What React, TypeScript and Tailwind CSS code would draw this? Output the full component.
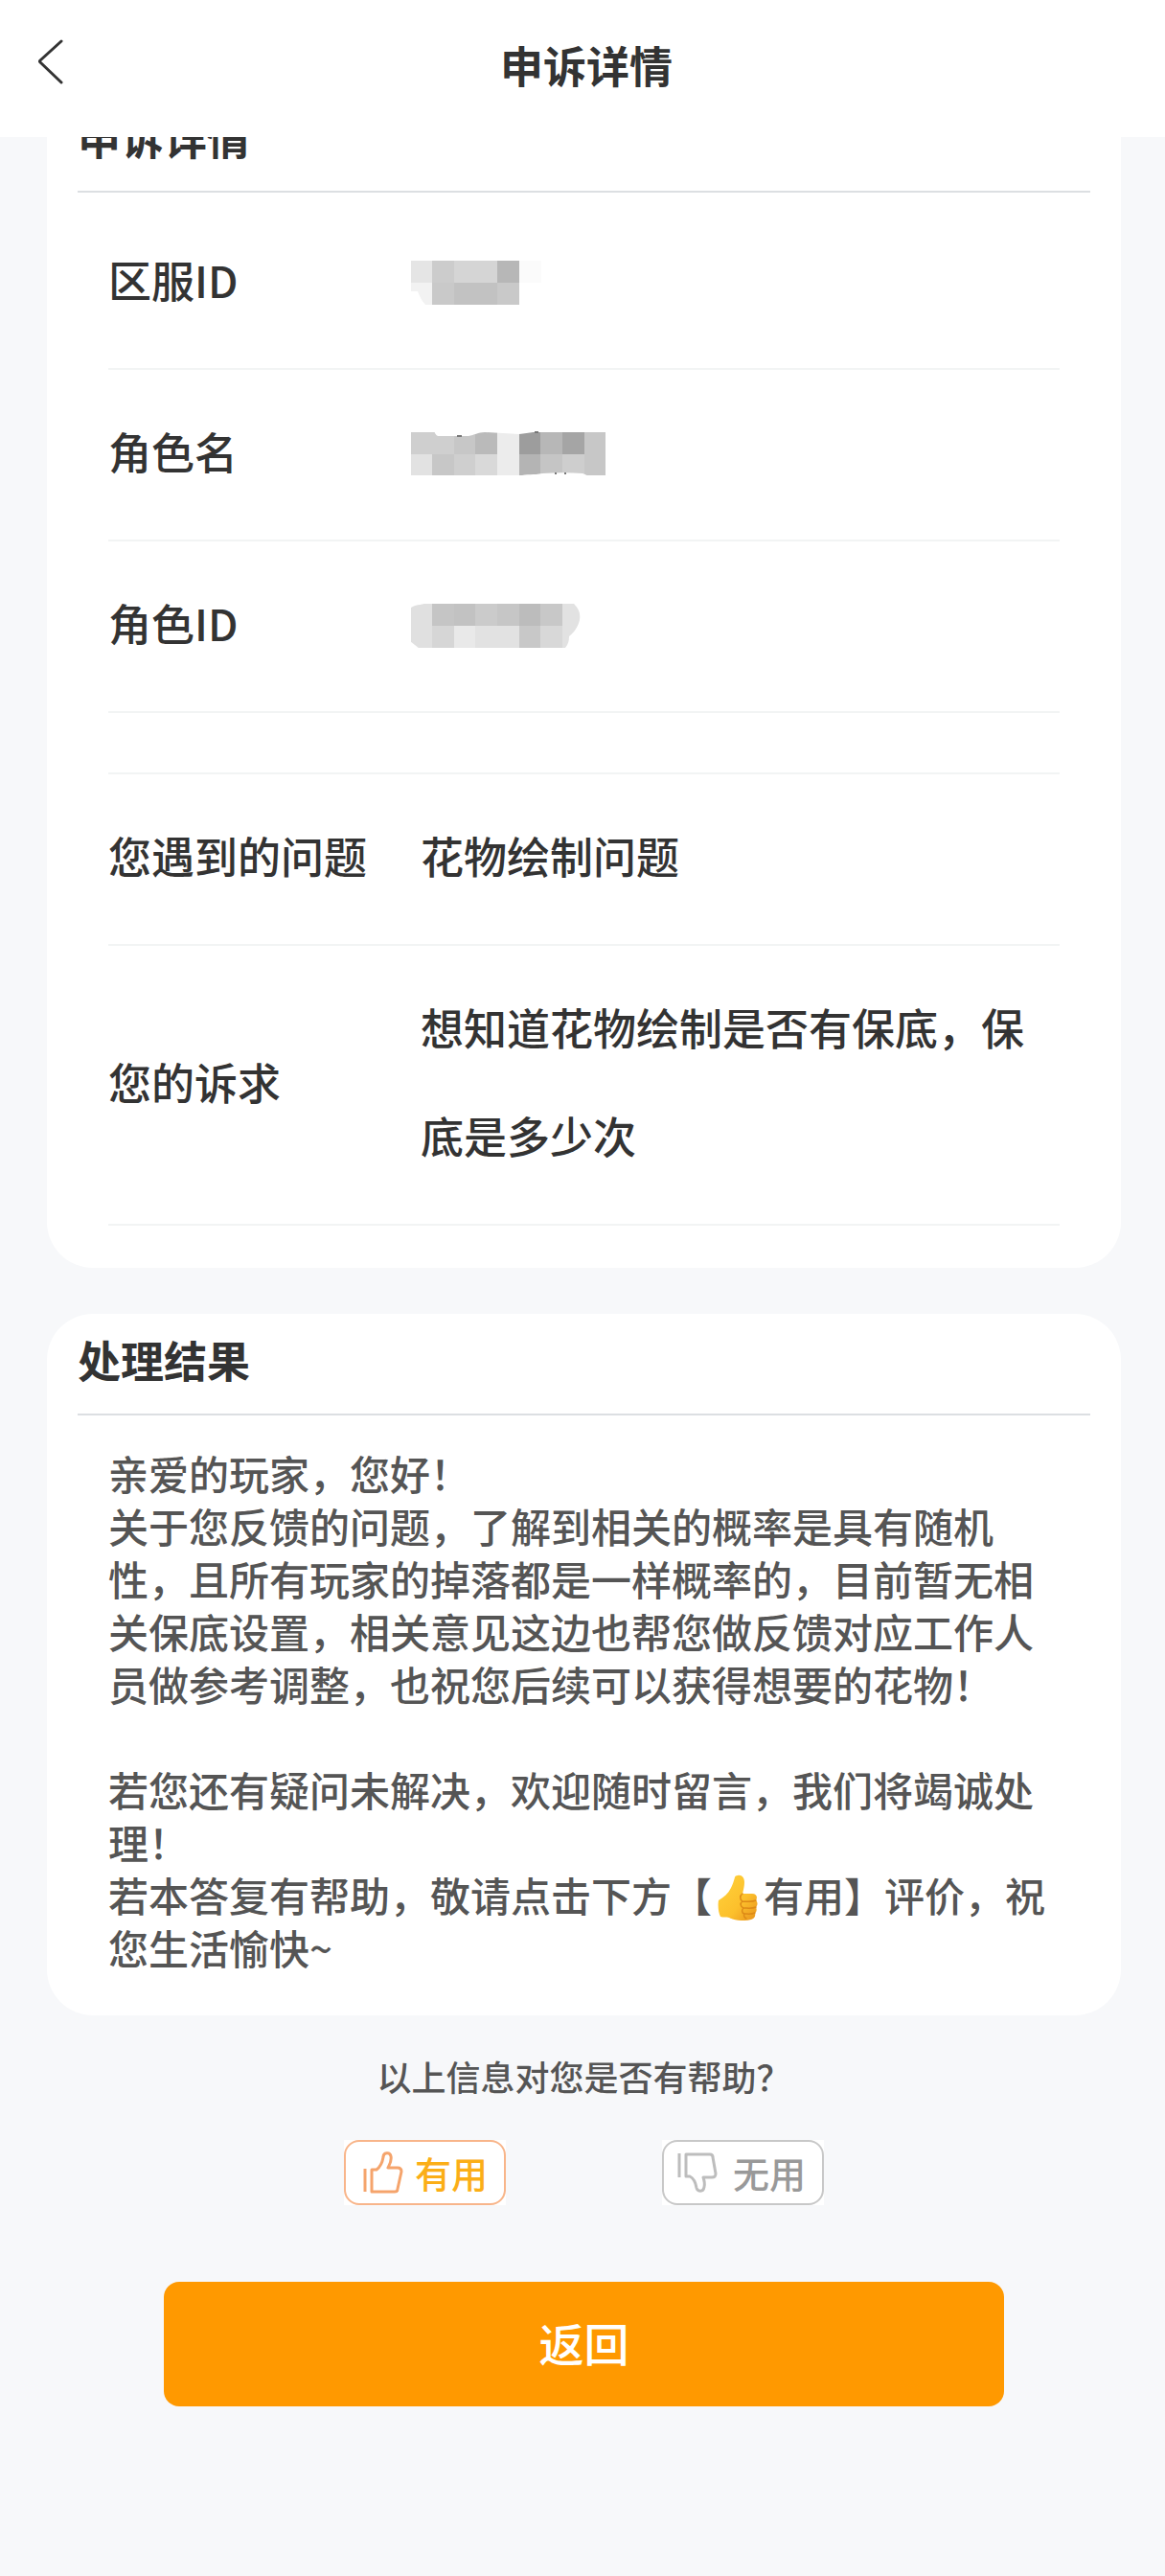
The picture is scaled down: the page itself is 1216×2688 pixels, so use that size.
import type { ReactNode } from "react";

type Tile = [x: number, y: number, w: number, h: number, fill: string];

// One redaction tile is 23px wide, two rows of them cover a value
const serverTiles: Tile[] = [
  [50, 17, 22, 23, "#e5e5e5"],
  [72, 17, 23, 23, "#cccccc"],
  [95, 17, 45, 23, "#d5d5d5"],
  [140, 17, 23, 23, "#b7b7b7"],
  [163, 17, 23, 23, "#fbfbfb"],
  [72, 40, 23, 23, "#c9c9c9"],
  [95, 40, 45, 23, "#c2c2c2"],
  [140, 40, 23, 23, "#c9c9c9"],
];

const nameTiles: Tile[] = [
  [50, 17, 45, 23, "#cfcfcf"],
  [95, 17, 22, 23, "#c7c7c7"],
  [117, 17, 23, 23, "#bababa"],
  [140, 17, 23, 45, "#ececec"],
  [163, 17, 22, 23, "#9d9d9d"],
  [185, 17, 23, 23, "#b7b7b7"],
  [208, 17, 23, 23, "#a5a5a5"],
  [231, 17, 22, 45, "#c7c7c7"],
  [50, 40, 22, 22, "#e2e2e2"],
  [72, 40, 23, 22, "#c7c7c7"],
  [95, 40, 22, 22, "#cfcfcf"],
  [117, 40, 23, 22, "#d9d9d9"],
  [163, 40, 22, 22, "#b4b4b4"],
  [185, 40, 23, 22, "#c5c5c5"],
  [208, 40, 23, 22, "#cecece"],
];

const roleTiles: Tile[] = [
  [50, 17, 22, 46, "#e0e0e0"],
  [72, 17, 23, 23, "#c5c5c5"],
  [95, 17, 22, 23, "#c2c2c2"],
  [117, 17, 23, 23, "#cbcbcb"],
  [140, 17, 23, 23, "#c6c6c6"],
  [163, 17, 22, 23, "#bcbcbc"],
  [185, 17, 23, 23, "#c8c8c8"],
  [72, 40, 23, 23, "#d6d6d6"],
  [95, 40, 22, 23, "#e9e9e9"],
  [117, 40, 46, 23, "#e2e2e2"],
  [163, 40, 22, 23, "#c8c8c8"],
  [185, 40, 23, 23, "#d8d8d8"],
];

function Mosaic({ tiles, children }: { tiles: Tile[]; children?: ReactNode }) {
  return (
    <svg viewBox="0 -3 320 80" className="-ml-15 h-20 w-80 shrink-0" shapeRendering="crispEdges" aria-hidden="true">
      {tiles.map(([x, y, w, h, fill]) => (
        <rect key={`${x}-${y}`} x={x} y={y} width={w} height={h} fill={fill} />
      ))}
      <g shapeRendering="auto">{children}</g>
    </svg>
  );
}

function Card({ title, children }: { title: string; children: ReactNode }) {
  return (
    <section className="rounded-[48px] bg-white px-8">
      <h2 className="border-b-2 border-[#dcdfe2] pt-[14px] pb-[22px] text-[45px] leading-[68px] font-bold text-[#333]">
        {title}
      </h2>
      <div className="px-8">{children}</div>
    </section>
  );
}

function Row({ label, children }: { label: string; children: ReactNode }) {
  return (
    <div className="flex items-center border-b-2 border-[#f2f4f4] pt-7 pb-9 text-[45px] leading-[113px] font-medium text-[#333]">
      <dt className="w-[326px] shrink-0">{label}</dt>
      <dd className="flex min-w-0 flex-1 items-center">{children}</dd>
    </div>
  );
}

function ThumbEmoji() {
  return (
    <svg viewBox="0 0 54 48" className="inline-block h-12 w-[54px] align-[-9px]" role="img" aria-label="👍">
      <defs>
        <linearGradient id="skin" x1="0" y1="0" x2="1" y2="1">
          <stop offset="0" stopColor="#ffd23c" />
          <stop offset="0.6" stopColor="#fcc02c" />
          <stop offset="1" stopColor="#e8921c" />
        </linearGradient>
      </defs>
      <path
        d="M27 1c4-1 7 2 7 7 0 4-1 8-2 12h10c5 0 6 4 4 7 2 2 2 5 0 7 1 2 1 5-1 6 1 4-1 6-4 7-8 2-17 1-23-2-3-1-6 0-9-1-2-4-3-11-2-17 5-3 10-7 13-13 2-4 3-8 4-11 0-1 1-2 3-2z"
        fill="url(#skin)"
      />
      <path
        d="M46 27c-4 2-9 1-14 1M46 34c-4 2-9 1-13 1M45 40c-4 2-8 1-11 1M32 20c-3 2-3 6 0 8-3 2-2 6 1 7-2 2-2 5 1 6-1 2 0 4 2 5"
        fill="none"
        stroke="#dd8a17"
        strokeWidth="1.5"
        strokeLinecap="round"
      />
    </svg>
  );
}

function ThumbUp() {
  return (
    <svg viewBox="0 0 44 46" className="h-[46px] w-11" fill="none" stroke="#f5a46c" strokeWidth="3" strokeLinejoin="round" aria-hidden="true">
      <path d="M4 19v24" />
      <path d="M11 20h5c4-3 6-7 7-13 0-5 7-6 8-1 1 5-1 8-3 12h10c3 0 4 2 4 4l-4 18c0 2-1 3-3 3H11z" />
    </svg>
  );
}

function ThumbDown() {
  return (
    <svg viewBox="0 0 44 46" className="h-[46px] w-11" fill="none" stroke="#bdbdbd" strokeWidth="3" strokeLinejoin="round" aria-hidden="true">
      <path d="M4 3v25" />
      <path d="M11 4h25c2 0 3 1 3 3l3 17c0 3-1 4-4 4H29c1 3 2 6 1 10-1 6-7 5-8 1-1-6-3-10-7-12h-4z" />
    </svg>
  );
}

export default function App() {
  return (
    <div className="min-h-screen bg-[#f7f8fa] font-['Noto_Sans_CJK_SC',sans-serif]" lang="zh-CN">
      <header className="sticky top-0 z-10 flex h-[143px] items-center bg-white px-9">
        <button type="button" aria-label="返回" className="mb-4 w-8 text-[#333]">
          <svg viewBox="0 0 32 48" className="h-12 w-8" fill="none" stroke="currentColor" strokeWidth="3" strokeLinecap="round" strokeLinejoin="round">
            <path d="M28 3L6 23q-1 1 0 2L28 46" />
          </svg>
        </button>
        <h1 className="flex-1 pr-6 pb-2 text-center text-[45px] leading-[68px] font-bold text-[#333]">申诉详情</h1>
      </header>

      <main className="-mt-12 pr-[46px] pl-[49px]">
        <Card title="申诉详情">
          <dl className="pt-[6px] pb-11">
            <Row label="区服ID">
              <Mosaic tiles={serverTiles}>
                <path d="M50 40h22v23h-7c-4-4-6-9-8-14h-7z" fill="#f2f2f2" />
              </Mosaic>
            </Row>
            <Row label="角色名">
              <Mosaic tiles={nameTiles}>
                <path d="M74 16c2 4 3 5 5 5h31c6-1 10-4 17-4l36 2c8-1 14-2 22-3z" fill="#fff" />
                <path d="M163 63c8-3 15-1 24-3 15-1 29-1 42 0 4 1 5 3 9 3z" fill="#fff" />
                <path d="M179 17h4M98 21h5M200 60h2M210 60h2" stroke="#777" strokeWidth="2" />
              </Mosaic>
            </Row>
            <Row label="角色ID">
              <Mosaic tiles={roleTiles}>
                <path d="M49 16h17c-6 3-12 1-17 6zM49 56l10 8H49z" fill="#fff" />
                <path d="M208 17h12c5 5 7 10 6 17-2 8-6 13-11 17 0 5-1 8-4 12h-3z" fill="#e2e2e2" />
              </Mosaic>
            </Row>
            <div className="h-16 border-b-2 border-[#f2f4f4]" />
            <Row label="您遇到的问题">花物绘制问题</Row>
            <Row label="您的诉求">想知道花物绘制是否有保底，保底是多少次</Row>
          </dl>
        </Card>

        <div className="mt-12">
          <Card title="处理结果">
            <div className="pt-8 pb-11 text-[42px] leading-[55px] font-medium text-[#555]">
              <p>亲爱的玩家，您好！</p>
              <p>
                关于您反馈的问题，了解到相关的概率是具有随机性，且所有玩家的掉落都是一样概率的，目前暂无相关保底设置，相关意见这边也帮您做反馈对应工作人员做参考调整，也祝您后续可以获得想要的花物！
              </p>
              <br />
              <p>若您还有疑问未解决，欢迎随时留言，我们将竭诚处理！</p>
              <p>
                若本答复有帮助，敬请点击下方【
                <ThumbEmoji />
                有用】评价，祝您生活愉快~
              </p>
            </div>
          </Card>
        </div>

        <p className="mt-9 text-center text-[36px] leading-[54px] font-medium text-[#555]">以上信息对您是否有帮助？</p>

        <div className="mt-10 flex justify-center gap-[163px] text-[38px] leading-none font-medium">
          <button type="button" className="bg-white text-[#fbae17]">
            <span className="flex h-[68px] w-[169px] items-center gap-3 rounded-2xl border-2 border-[#f8b58a] pl-4">
              <ThumbUp />
              有用
            </span>
          </button>
          <button type="button" className="bg-white text-[#999]">
            <span className="flex h-[68px] w-[169px] items-center gap-4 rounded-2xl border-2 border-[#c8c8c8] pl-3">
              <ThumbDown />
              无用
            </span>
          </button>
        </div>

        <div className="mt-20 px-[122px] pb-16">
          <button type="button" className="h-[130px] w-full rounded-2xl bg-[#ff9900] pb-1 text-[47px] font-medium text-white">
            返回
          </button>
        </div>
      </main>
    </div>
  );
}
